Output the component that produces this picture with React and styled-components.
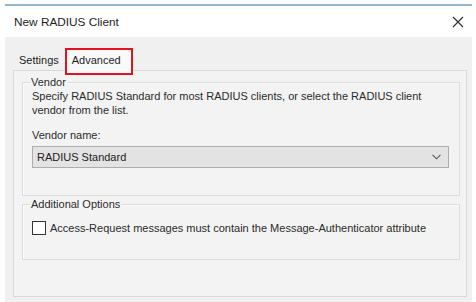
import styled, { createGlobalStyle } from "styled-components";

const GlobalStyle = createGlobalStyle`
  html, body {
    margin: 0;
    padding: 0;
    background: #ffffff;
  }
  body {
    font-family: "Liberation Sans", Arial, sans-serif;
    color: #2b2b2b;
  }
`;

const Window = styled.div`
  width: 476px;
  height: 302px;
  display: flex;
  flex-direction: column;
  background: #ffffff;
  box-sizing: border-box;
  padding-top: 4px;
`;

const TopLine = styled.div`
  height: 2px;
  margin: 0 4px 0 5px;
  background: #8fb6d2;
`;

const TitleBar = styled.div`
  height: 31px;
  display: flex;
  align-items: center;
  justify-content: space-between;
  padding: 0 11px 0 14px;
  font-size: 11.8px;
  color: #1e1e1e;
`;

const CloseButton = styled.span`
  display: flex;
  align-items: center;
  justify-content: center;
  width: 14px;
  height: 14px;
`;

const Body = styled.div`
  flex: 1;
  margin: 0 4px 0 5px;
  background: #f0f0f0;
  padding: 11px 5px 5px 8px;
  display: flex;
  flex-direction: column;
`;

const TabRow = styled.div`
  display: flex;
  align-items: flex-end;
  height: 22px;
  padding-left: 2px;
  position: relative;
  z-index: 1;
`;

const Tab = styled.div`
  font-size: 11px;
  line-height: 14px;
  padding: ${(p) => (p.$active ? "3px 10px 6px 5px" : "2px 5px 3px 4px")};
  margin-bottom: ${(p) => (p.$active ? "-3px" : "0")};
  margin-left: ${(p) => (p.$active ? "3px" : "0")};
  color: #1e1e1e;
  background: ${(p) => (p.$active ? "#f9f9f9" : "#f0f0f0")};
  outline: ${(p) => (p.$active ? "2px solid #e0141e" : "none")};
`;

const Panel = styled.div`
  flex: 1;
  border: 1px solid #d9d9d9;
  background: #f3f3f3;
  padding: 5px 6px 0 8px;
  display: flex;
  flex-direction: column;
  gap: 2px;
`;

const Group = styled.fieldset`
  margin: 0;
  border: 1px solid #dcdcdc;
  box-shadow: inset 1px 1px 0 #fbfbfb;
  padding: 1px 9px 0 9px;
  display: flex;
  flex-direction: column;
  min-height: ${(p) => p.$h}px;
  box-sizing: border-box;
`;

const Legend = styled.legend`
  font-size: 11px;
  padding: 0 1px;
  margin-left: -2px;
  color: #2b2b2b;
`;

const Text = styled.p`
  margin: ${(p) => p.$m || "0"};
  font-size: 11px;
  line-height: 14px;
  color: #2b2b2b;
  white-space: nowrap;
`;

const Select = styled.div`
  height: 22px;
  box-sizing: border-box;
  border: 1px solid #adadad;
  background: #e3e3e3;
  display: flex;
  align-items: center;
  justify-content: space-between;
  padding: 0 7px 0 4px;
  font-size: 11px;
  color: #222;
  margin-right: 1px;
`;

const CheckRow = styled.label`
  display: flex;
  align-items: center;
  gap: 4px;
  font-size: 11px;
  margin-top: 10px;
  white-space: nowrap;
`;

const Box = styled.span`
  width: 12px;
  height: 12px;
  border: 1px solid #333;
  background: #ffffff;
`;

export default function App() {
  return (
    <>
      <GlobalStyle />
      <Window>
        <TopLine />
        <TitleBar>
          <span>New RADIUS Client</span>
          <CloseButton>
            <svg width="12" height="12" viewBox="0 0 12 12">
              <path d="M1 1 L11 11 M11 1 L1 11" stroke="#333" strokeWidth="1.2" />
            </svg>
          </CloseButton>
        </TitleBar>
        <Body>
          <TabRow>
            <Tab>Settings</Tab>
            <Tab $active>Advanced</Tab>
          </TabRow>
          <Panel>
            <Group $h={120}>
              <Legend>Vendor</Legend>
              <Text>
                Specify RADIUS Standard for most RADIUS clients, or select the RADIUS client
                <br />
                vendor from the list.
              </Text>
              <Text $m="11px 0 4px">Vendor name:</Text>
              <Select>
                <span>RADIUS Standard</span>
                <svg width="9" height="6" viewBox="0 0 9 6">
                  <path d="M0.5 0.8 L4.5 4.8 L8.5 0.8" fill="none" stroke="#555" strokeWidth="1.1" />
                </svg>
              </Select>
            </Group>
            <Group $h={62}>
              <Legend>Additional Options</Legend>
              <CheckRow>
                <Box />
                <span>Access-Request messages must contain the Message-Authenticator attribute</span>
              </CheckRow>
            </Group>
          </Panel>
        </Body>
      </Window>
    </>
  );
}
